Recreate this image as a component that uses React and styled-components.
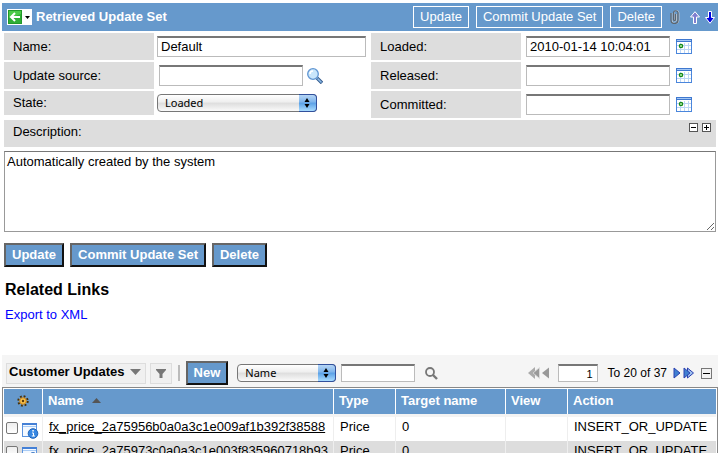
import React from "react";
import styled, { createGlobalStyle, css } from "styled-components";

const GlobalStyle = createGlobalStyle`
  * { box-sizing: border-box; }
  html { overflow: hidden; }
  body {
    margin: 0;
    background: #fff;
    color: #000;
    font: 13px/16px "Liberation Sans", Arial, sans-serif;
  }
  button, input, select, textarea { font: inherit; color: inherit; margin: 0; border-radius: 0; }
  svg { display: block; flex: none; }
`;

const Page = styled.main`
  height: 100vh;
  overflow: hidden;
  padding: 3px 4px 0 2px;
`;

const TitleBar = styled.header`
  display: flex;
  align-items: center;
  height: 28px;
  padding: 0 3px 0 5px;
  background: #6699cc;
  color: #fff;
`;

const BackButton = styled.button`
  display: flex;
  align-items: center;
  gap: 3px;
  width: 25px;
  height: 16px;
  padding: 0 0 0 1px;
  border: 0;
  background: #fff;
`;

const Title = styled.h1`
  flex: 1;
  margin: 0 0 0 4px;
  font-size: 13px;
  line-height: 16px;
`;

const BarActions = styled.div`
  display: flex;
  gap: 7px;
`;

const BarButton = styled.button`
  height: 22px;
  padding: 0 6px;
  border: 1px solid #fff;
  background: #6699cc;
  line-height: 18px;
  white-space: nowrap;
`;

const IconButton = styled.button`
  display: flex;
  align-items: center;
  padding: 0;
  border: 0;
  background: none;
  margin-left: ${(p) => p.$gap || 0}px;
`;

const Form = styled.form`
  padding: 2px 2px 0;
`;

const Columns = styled.div`
  display: grid;
  grid-template-columns: minmax(0, 21fr) minmax(0, 20fr);
  gap: 5px;
  align-items: start;
`;

const FieldStack = styled.div`
  display: flex;
  flex-direction: column;
  gap: 2px;
`;

const Field = styled.div`
  display: flex;
  align-items: center;
  height: ${(p) => (p.$short ? 24 : 27)}px;
`;

const FieldLabel = styled.label`
  flex: 0 0 150px;
  align-self: stretch;
  display: flex;
  align-items: center;
  padding-left: 9px;
  background: #ddd;
`;

const inputFrame = css`
  border: 1px solid #bbb;
  border-top: 2px solid #777;
  background: #fff;
  outline: 0;
`;

const TextInput = styled.input`
  ${inputFrame}
  flex: ${(p) => (p.$fill ? "1" : "0 0 144px")};
  min-width: 0;
  height: 21px;
  margin-left: ${(p) => p.$gap}px;
  padding: 0 3px 2px;
`;

const SelectBox = styled.span`
  position: relative;
  display: block;
  flex: 0 0 ${(p) => p.$width}px;
  height: 18px;
  margin-left: ${(p) => p.$gap}px;
`;

const Select = styled.select`
  appearance: none;
  width: 100%;
  height: 18px;
  padding: 0 20px 0 7px;
  border: 1px solid #777;
  border-radius: 4px;
  background: linear-gradient(#fff, #eee 45%, #ddd 50%, #fafafa);
  font: 11px/14px "Noto Sans", sans-serif;
`;

const SelectCap = styled.span`
  position: absolute;
  top: 0;
  right: 0;
  width: 18px;
  height: 18px;
  padding: 2px 0 0 4px;
  border: 1px solid #31509c;
  border-left: 0;
  border-radius: 0 4px 4px 0;
  background: linear-gradient(#b5d5f5, #7db4ec 45%, #5aa0e6 50%, #a9dcff);
  pointer-events: none;
`;

const DescriptionBar = styled.div`
  display: flex;
  align-items: flex-start;
  gap: 4px;
  height: 27px;
  margin-top: 2px;
  padding: 3px 5px 0 9px;
  background: #ddd;
`;

const DescriptionLabel = styled.label`
  flex: 1;
  line-height: 18px;
`;

const Description = styled.textarea`
  display: block;
  width: 100%;
  height: 81px;
  margin-top: 4px;
  padding: 2px;
  border: 1px solid #999;
  border-top-color: #777;
  outline: 0;
`;

const ButtonRow = styled.div`
  display: flex;
  gap: 6px;
  margin-top: 11px;
`;

const ActionButton = styled.button`
  height: 24px;
  padding: 0 6px;
  border: 2px solid;
  border-color: #666 #111 #111 #666;
  background: #6699cc;
  color: #fff;
  font-weight: bold;
  line-height: 18px;
  white-space: nowrap;
`;

const Related = styled.section`
  padding: 13px 3px 0;
`;

const RelatedTitle = styled.h2`
  margin: 0;
  font-size: 16px;
  line-height: 20px;
`;

const RelatedLink = styled.a`
  display: inline-block;
  margin-top: 7px;
  color: #00f;
  text-decoration: none;
`;

const List = styled.section`
  margin-top: 32px;
`;

const ListBar = styled.div`
  display: flex;
  align-items: center;
  height: 32px;
  padding: 4px 6px 0 4px;
  background: #f5f5f5;
`;

const Chip = styled.button`
  display: flex;
  align-items: center;
  gap: 5px;
  height: 21px;
  margin-right: 4px;
  padding: ${(p) => (p.$icon ? "0 5px" : "0 4px 2px 2px")};
  border: 1px solid #ddd;
  background: #f0f0f0;
  font-weight: bold;
  white-space: nowrap;
`;

const Divider = styled.span`
  width: 2px;
  height: 16px;
  margin: 0 6px 0 2px;
  background: #bbb;
`;

const SmallInput = styled.input`
  ${inputFrame}
  flex: 0 0 ${(p) => p.$width}px;
  width: ${(p) => p.$width}px;
  height: 18px;
  margin-left: ${(p) => p.$gap}px;
  padding: 0 4px;
  font-size: 11px;
  text-align: ${(p) => p.$align || "left"};
`;

const Pager = styled.div`
  display: flex;
  align-items: center;
  margin-left: auto;
  font-size: 12px;
`;

const PageRange = styled.span`
  margin: 0 6px 0 10px;
  white-space: nowrap;
`;

const TableFrame = styled.div`
  padding: 1px;
  border: 1px solid #888;
  border-width: 1px 1px 0;
`;

const Table = styled.table`
  width: 100%;
  table-layout: fixed;
  border-spacing: 0;
`;

const Col = styled.col`
  width: ${(p) => p.$width}px;
`;

const HeadCell = styled.th`
  height: 25px;
  padding: 0 0 2px 5px;
  border-right: 1px solid #fff;
  background: #6699cc;
  color: #fff;
  text-align: left;
  white-space: nowrap;
  &:last-child { border-right: 0; }
`;

const SortLabel = styled.span`
  display: flex;
  align-items: center;
  gap: 9px;
`;

const Row = styled.tr`
  background: ${(p) => (p.$alt ? "#ddd" : "#fff")};
`;

const Spacer = styled.td`
  height: 3px;
  padding: 0;
  background: #f3f3f3;
`;

const Cell = styled.td`
  height: 24px;
  padding: 0 0 4px 6px;
  border-right: 1px solid #eee;
  white-space: nowrap;
  overflow: hidden;
  &:last-child { border-right: 0; }
`;

const ToolCell = styled(Cell)`
  padding: 2px 0 0 2px;
`;

const Tools = styled.div`
  display: flex;
  align-items: flex-start;
  gap: 4px;
`;

const Check = styled.input`
  appearance: none;
  width: 12px;
  height: 12px;
  margin: 0;
  border: 1px solid #777;
  border-radius: 2px;
  background: linear-gradient(#eee, #fff);
`;

const RecordLink = styled.a`
  color: #000;
  text-decoration: underline;
`;

const BackIcon = () => (
  <svg width="14" height="14" viewBox="0 0 14 14">
    <rect width="14" height="14" fill="#22992a" />
    <rect x="1" y="1" width="12" height="12" fill="#4cca48" />
    <path d="M1 13V8l12-4v9z" fill="#2fae35" />
    <path d="M12 7H3.500M7 3L3 7l4 4" fill="none" stroke="#fff" strokeWidth="2" />
  </svg>
);

const Caret = ({ width = 5, height = 3, color = "#000", up = false }) => (
  <svg width={width} height={height} viewBox="0 0 10 6" preserveAspectRatio="none">
    <path d={up ? "M5 0l5 6H0z" : "M0 0h10L5 6z"} fill={color} />
  </svg>
);

const ClipIcon = () => (
  <svg width="10" height="14" viewBox="0 0 10 14" fill="none">
    <path d="M2 3v7a3 3 0 0 0 7 0V3a2 2 0 0 0-5 0v7a1 1 0 0 0 2.500 0V4" stroke="#b9c6d2" />
    <path d="M1 3v7a3.500 3.500 0 0 0 7 0V3a2 2 0 0 0-4.500 0v6.500a1 1 0 0 0 2 0V4" stroke="#5d656d" strokeWidth="1.200" />
  </svg>
);

const ArrowIcon = ({ down, color }) => (
  <svg width="10" height="13" viewBox="0 0 10 13">
    <path
      d={down ? "M3.500 .5h3v6h3L5 12.300.5 6.500h3z" : "M5 .7L9.500 6h-3v6.500h-3V6h-3z"}
      fill={color}
      stroke="#fff"
    />
  </svg>
);

const LensIcon = () => (
  <svg width="16" height="16" viewBox="0 0 16 16">
    <path d="M10 10l5 5" stroke="#31598c" strokeWidth="3.400" />
    <path d="M10.500 10.500l4 4" stroke="#8dbbe8" strokeWidth="1.600" />
    <circle cx="6" cy="6" r="5.300" fill="#c9e6fb" stroke="#5f95d2" strokeWidth="1.300" />
    <path d="M3 6a3 3 0 0 1 3-3" fill="none" stroke="#fff" strokeWidth="1.500" />
  </svg>
);

const SearchIcon = () => (
  <svg width="13" height="13" viewBox="0 0 13 13" fill="none" stroke="#777" strokeWidth="1.800">
    <circle cx="5" cy="5" r="4" />
    <path d="M8 8l4 4" strokeWidth="2.400" />
  </svg>
);

const CalendarIcon = () => (
  <svg width="16" height="15" viewBox="0 0 16 15">
    <rect x=".5" y=".5" width="15" height="14" fill="#fff" stroke="#4a86dc" />
    <path d="M1 6.500h14M1 10.500h14M4.500 4v10M8.500 4v10M12.500 4v10" stroke="#bcd6f5" />
    <rect width="16" height="3" fill="#3f78cf" />
    <path d="M1 1.500h14" stroke="#a4c8f5" />
    <circle cx="5" cy="7" r="1.700" fill="#a8e79b" stroke="#16881c" strokeWidth="1.200" />
  </svg>
);

const BoxIcon = ({ size = 9, plus, shaded }) => {
  const mid = size / 2;
  return (
    <svg width={size} height={size} viewBox={`0 0 ${size} ${size}`}>
      <rect x=".5" y=".5" width={size - 1} height={size - 1} fill={shaded ? "#f2f2f2" : "#fff"} stroke={shaded ? "#777" : "#555"} />
      <path d={`M2 ${mid}h${size - 4}${plus ? `M${mid} 2v${size - 4}` : ""}`} stroke="#000" />
    </svg>
  );
};

const FunnelIcon = () => (
  <svg width="10" height="9" viewBox="0 0 10 9">
    <path d="M0 0h10v1L6.500 5v4h-3V5L0 1z" fill="#777" />
  </svg>
);

const StepIcon = ({ back }) =>
  back ? (
    <svg width="22" height="12" viewBox="0 0 22 12" fill="#999">
      <path d="M7 0v12L0 6z" fill="#aaa" />
      <path d="M11.500 .5v11L5 6z" stroke="#ddd" strokeWidth=".8" />
      <path d="M21 .5v11L14 6z" />
    </svg>
  ) : (
    <svg width="22" height="12" viewBox="0 0 22 12" fill="#3f7fd0" stroke="#2b41b0">
      <path d="M1 1v10l6-5z" />
      <path d="M14.500 1v10l6-5z" fill="#9fc0ee" />
      <path d="M11 1v10l6-5z" />
    </svg>
  );

const GearIcon = () => (
  <svg width="12" height="12" viewBox="0 0 12 12">
    <circle cx="6" cy="6" r="4.700" fill="none" stroke="#4a3108" strokeWidth="2" strokeDasharray="1.850 1.850" />
    <circle cx="6" cy="6" r="3.300" fill="#f7c04a" stroke="#c78420" />
    <circle cx="6" cy="6" r="1.200" fill="#5a3a0c" />
  </svg>
);

const RecordIcon = () => (
  <svg width="17" height="17" viewBox="0 0 17 17">
    <rect x=".5" y="1.500" width="14" height="13" fill="#f4f9ff" stroke="#5b93de" />
    <path d="M0 2h15" stroke="#4480d6" strokeWidth="2" />
    <path d="M1 4.500h13" stroke="#a8cbf5" />
    <circle cx="11" cy="11.500" r="4.800" fill="#3787e2" stroke="#2063b8" />
    <path d="M10 11h1.500v3M9.800 14h3.200" stroke="#fff" fill="none" />
    <rect x="10.300" y="8" width="1.500" height="1.500" fill="#fff" />
  </svg>
);

const StepperIcon = () => (
  <svg width="8" height="12" viewBox="0 0 8 12">
    <path d="M4 1l2.500 4h-5zM4 11L1.500 7h5z" />
  </svg>
);

function Dropdown({ id, value, width, gap, label }) {
  return (
    <SelectBox $width={width} $gap={gap}>
      <Select id={id} defaultValue={value} aria-label={label}>
        <option>{value}</option>
      </Select>
      <SelectCap><StepperIcon /></SelectCap>
    </SelectBox>
  );
}

function DateField({ id, label, value = "" }) {
  return (
    <Field>
      <FieldLabel htmlFor={id}>{label}</FieldLabel>
      <TextInput id={id} defaultValue={value} $gap={5} />
      <IconButton type="button" aria-label={`Pick ${label}`} $gap={6}><CalendarIcon /></IconButton>
    </Field>
  );
}

const updates = [
  "fx_price_2a75956b0a0a3c1e009af1b392f38588",
  "fx_price_2a75973c0a0a3c1e003f835960718b93",
];

export default function App() {
  return (
    <Page>
      <GlobalStyle />
      <TitleBar>
        <BackButton aria-label="Back"><BackIcon /><Caret /></BackButton>
        <Title>Retrieved Update Set</Title>
        <BarActions>
          <BarButton>Update</BarButton>
          <BarButton>Commit Update Set</BarButton>
          <BarButton>Delete</BarButton>
        </BarActions>
        <IconButton aria-label="Attachments" $gap={8}><ClipIcon /></IconButton>
        <IconButton aria-label="Previous record" $gap={10}><ArrowIcon color="#7f7fd0" /></IconButton>
        <IconButton aria-label="Next record" $gap={5}><ArrowIcon down color="#0000e0" /></IconButton>
      </TitleBar>

      <Form onSubmit={(e) => e.preventDefault()}>
        <Columns>
          <FieldStack>
            <Field>
              <FieldLabel htmlFor="name">Name:</FieldLabel>
              <TextInput id="name" defaultValue="Default" $fill $gap={3} />
            </Field>
            <Field>
              <FieldLabel htmlFor="source">Update source:</FieldLabel>
              <TextInput id="source" $gap={5} />
              <IconButton type="button" aria-label="Look up source" $gap={4}><LensIcon /></IconButton>
            </Field>
            <Field $short>
              <FieldLabel htmlFor="state">State:</FieldLabel>
              <Dropdown id="state" value="Loaded" width={160} gap={3} />
            </Field>
          </FieldStack>
          <FieldStack>
            <DateField id="loaded" label="Loaded:" value="2010-01-14 10:04:01" />
            <DateField id="released" label="Released:" />
            <DateField id="committed" label="Committed:" />
          </FieldStack>
        </Columns>
        <DescriptionBar>
          <DescriptionLabel htmlFor="description">Description:</DescriptionLabel>
          <IconButton type="button" aria-label="Shrink"><BoxIcon /></IconButton>
          <IconButton type="button" aria-label="Expand"><BoxIcon plus /></IconButton>
        </DescriptionBar>
        <Description id="description" defaultValue="Automatically created by the system" />
        <ButtonRow>
          <ActionButton>Update</ActionButton>
          <ActionButton>Commit Update Set</ActionButton>
          <ActionButton>Delete</ActionButton>
        </ButtonRow>
      </Form>

      <Related>
        <RelatedTitle>Related Links</RelatedTitle>
        <RelatedLink href="#export">Export to XML</RelatedLink>
      </Related>

      <List>
        <ListBar>
          <Chip>Customer Updates <Caret width={11} height={6} color="#777" /></Chip>
          <Chip $icon aria-label="Filter"><FunnelIcon /></Chip>
          <Divider />
          <ActionButton>New</ActionButton>
          <Dropdown value="Name" width={99} gap={9} label="Search field" />
          <SmallInput aria-label="Search text" $width={74} $gap={5} />
          <IconButton aria-label="Search" $gap={10}><SearchIcon /></IconButton>
          <Pager>
            <IconButton aria-label="Previous page"><StepIcon back /></IconButton>
            <SmallInput aria-label="First row" defaultValue="1" $width={40} $gap={8} $align="right" />
            <PageRange>To 20 of 37</PageRange>
            <IconButton aria-label="Next page"><StepIcon /></IconButton>
            <IconButton aria-label="Collapse list" $gap={6}><BoxIcon size={11} shaded /></IconButton>
          </Pager>
        </ListBar>
        <TableFrame>
          <Table>
            <colgroup>
              <Col $width={39} />
              <col />
              <Col $width={62} />
              <Col $width={110} />
              <Col $width={62} />
              <Col $width={148} />
            </colgroup>
            <thead>
              <tr>
                <HeadCell><IconButton aria-label="Personalize list" $gap={8}><GearIcon /></IconButton></HeadCell>
                <HeadCell><SortLabel>Name <Caret width={9} height={5} color="#555" up /></SortLabel></HeadCell>
                <HeadCell>Type</HeadCell>
                <HeadCell>Target name</HeadCell>
                <HeadCell>View</HeadCell>
                <HeadCell>Action</HeadCell>
              </tr>
            </thead>
            <tbody>
              <tr><Spacer colSpan={6} /></tr>
              {updates.map((name, i) => (
                <Row key={name} $alt={i % 2 === 1}>
                  <ToolCell>
                    <Tools>
                      <Check type="checkbox" aria-label={`Select ${name}`} />
                      <IconButton aria-label={`Preview ${name}`}><RecordIcon /></IconButton>
                    </Tools>
                  </ToolCell>
                  <Cell><RecordLink href={`#${name}`}>{name}</RecordLink></Cell>
                  <Cell>Price</Cell>
                  <Cell>0</Cell>
                  <Cell />
                  <Cell>INSERT_OR_UPDATE</Cell>
                </Row>
              ))}
            </tbody>
          </Table>
        </TableFrame>
      </List>
    </Page>
  );
}
